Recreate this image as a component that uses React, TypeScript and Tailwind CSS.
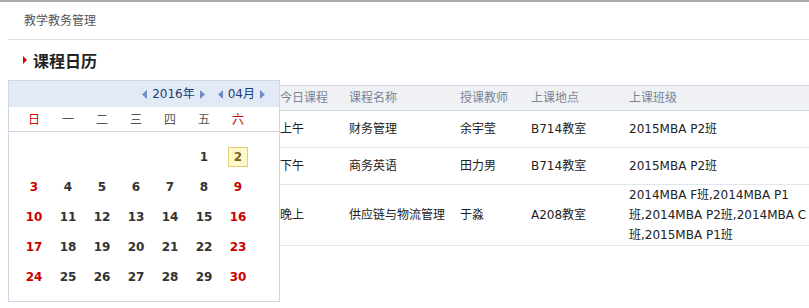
import React from "react";

const cjk = { fontFamily: '"DejaVu Sans", "Noto Sans CJK SC", sans-serif' };

function TriL() {
  return (
    <svg width="5" height="9" viewBox="0 0 5 9" className="block">
      <path d="M5 0 L0 4.5 L5 9 Z" fill="#6f8fc4" />
    </svg>
  );
}
function TriR() {
  return (
    <svg width="5" height="9" viewBox="0 0 5 9" className="block">
      <path d="M0 0 L5 4.5 L0 9 Z" fill="#6f8fc4" />
    </svg>
  );
}

const weekdays = ["日", "一", "二", "三", "四", "五", "六"];
const dates: (number | null)[] = [
  null, null, null, null, null, 1, 2,
  3, 4, 5, 6, 7, 8, 9,
  10, 11, 12, 13, 14, 15, 16,
  17, 18, 19, 20, 21, 22, 23,
  24, 25, 26, 27, 28, 29, 30,
];

function Calendar() {
  return (
    <div className="w-[272px] shrink-0 border border-[#cdd6e4] bg-white">
      <div className="h-[26px] bg-[#e2eaf6] flex items-center justify-end pr-[14px] text-[12px] text-[#1c3d74]" style={cjk}>
        <TriL />
        <span className="mx-[5px]">2016年</span>
        <TriR />
        <span className="w-[13px]" />
        <TriL />
        <span className="mx-[5px]">04月</span>
        <TriR />
      </div>
      <div className="h-[25px] border-b border-[#cdd6e4] grid grid-cols-[repeat(7,34px)] pl-[8px] items-center text-[12px]" style={cjk}>
        {weekdays.map((w, i) => (
          <div key={w} className={"text-center pt-[2px] " + (i === 0 || i === 6 ? "text-[#cc0000]" : "text-[#555555]")}>
            {w}
          </div>
        ))}
      </div>
      <div className="grid grid-cols-[repeat(7,34px)] auto-rows-[30px] pl-[8px] pt-[10px] pb-[9px]" style={{ fontFamily: '"DejaVu Sans", sans-serif' }}>
        {dates.map((d, i) => {
          const col = i % 7;
          const red = col === 0 || col === 6;
          if (d === null) return <div key={i} />;
          if (d === 2) {
            return (
              <div key={i} className="flex items-center justify-center">
                <div className="w-[20px] h-[20px] bg-[#fff9c9] border border-[#e3cd7c] flex items-center justify-center text-[12px] font-bold text-[#7a6224]">
                  2
                </div>
              </div>
            );
          }
          return (
            <div key={i} className={"flex items-center justify-center text-[12px] font-bold " + (red ? "text-[#cc0000]" : "text-[#333333]")}>
              {d}
            </div>
          );
        })}
      </div>
    </div>
  );
}

const rows = [
  { t: "上午", n: "财务管理", te: "余宇莹", p: "B714教室", c: ["2015MBA P2班"] },
  { t: "下午", n: "商务英语", te: "田力男", p: "B714教室", c: ["2015MBA P2班"] },
  {
    t: "晚上",
    n: "供应链与物流管理",
    te: "于淼",
    p: "A208教室",
    c: ["2014MBA F班,2014MBA P1", "班,2014MBA P2班,2014MBA C", "班,2015MBA P1班"],
  },
];

function Table() {
  const cols = "grid grid-cols-[69px_111px_71px_98px_1fr]";
  return (
    <div className="flex-1 mt-[5px] text-[12px]" style={cjk}>
      <div className={cols + " h-[26px] bg-[#eff1f5] border-t border-b border-[#d3d9e2] items-center text-[#7a8495]"}>
        <div>今日课程</div>
        <div>课程名称</div>
        <div>授课教师</div>
        <div>上课地点</div>
        <div>上课班级</div>
      </div>
      {rows.map((r, i) => (
        <div key={i} className={cols + " min-h-[37px] border-b border-[#e2e5ea] items-center text-[#222222]"}>
          <div>{r.t}</div>
          <div className="whitespace-nowrap">{r.n}</div>
          <div>{r.te}</div>
          <div>{r.p}</div>
          <div className="leading-[20px] whitespace-nowrap">
            {r.c.map((line, j) => (
              <div key={j}>{line}</div>
            ))}
          </div>
        </div>
      ))}
    </div>
  );
}

export default function App() {
  return (
    <div className="w-[809px] h-[308px] bg-white border-t-2 border-[#ababab] overflow-hidden">
      <div className="ml-[8px]">
        <div className="h-[38px] flex items-center pl-[16px] text-[12px] text-[#555555] border-b border-[#dedede]" style={cjk}>
          教学教务管理
        </div>
        <div className="h-[40px] flex items-center pl-[15px]">
          <svg width="4" height="8" viewBox="0 0 4 8" className="block">
            <path d="M0 0 L4 4 L0 8 Z" fill="#e00000" />
          </svg>
          <span className="ml-[6px] text-[16px] font-bold text-[#222222]" style={{ fontFamily: '"Noto Sans CJK SC", sans-serif' }}>
            课程日历
          </span>
        </div>
        <div className="flex items-start">
          <Calendar />
          <Table />
        </div>
      </div>
    </div>
  );
}
